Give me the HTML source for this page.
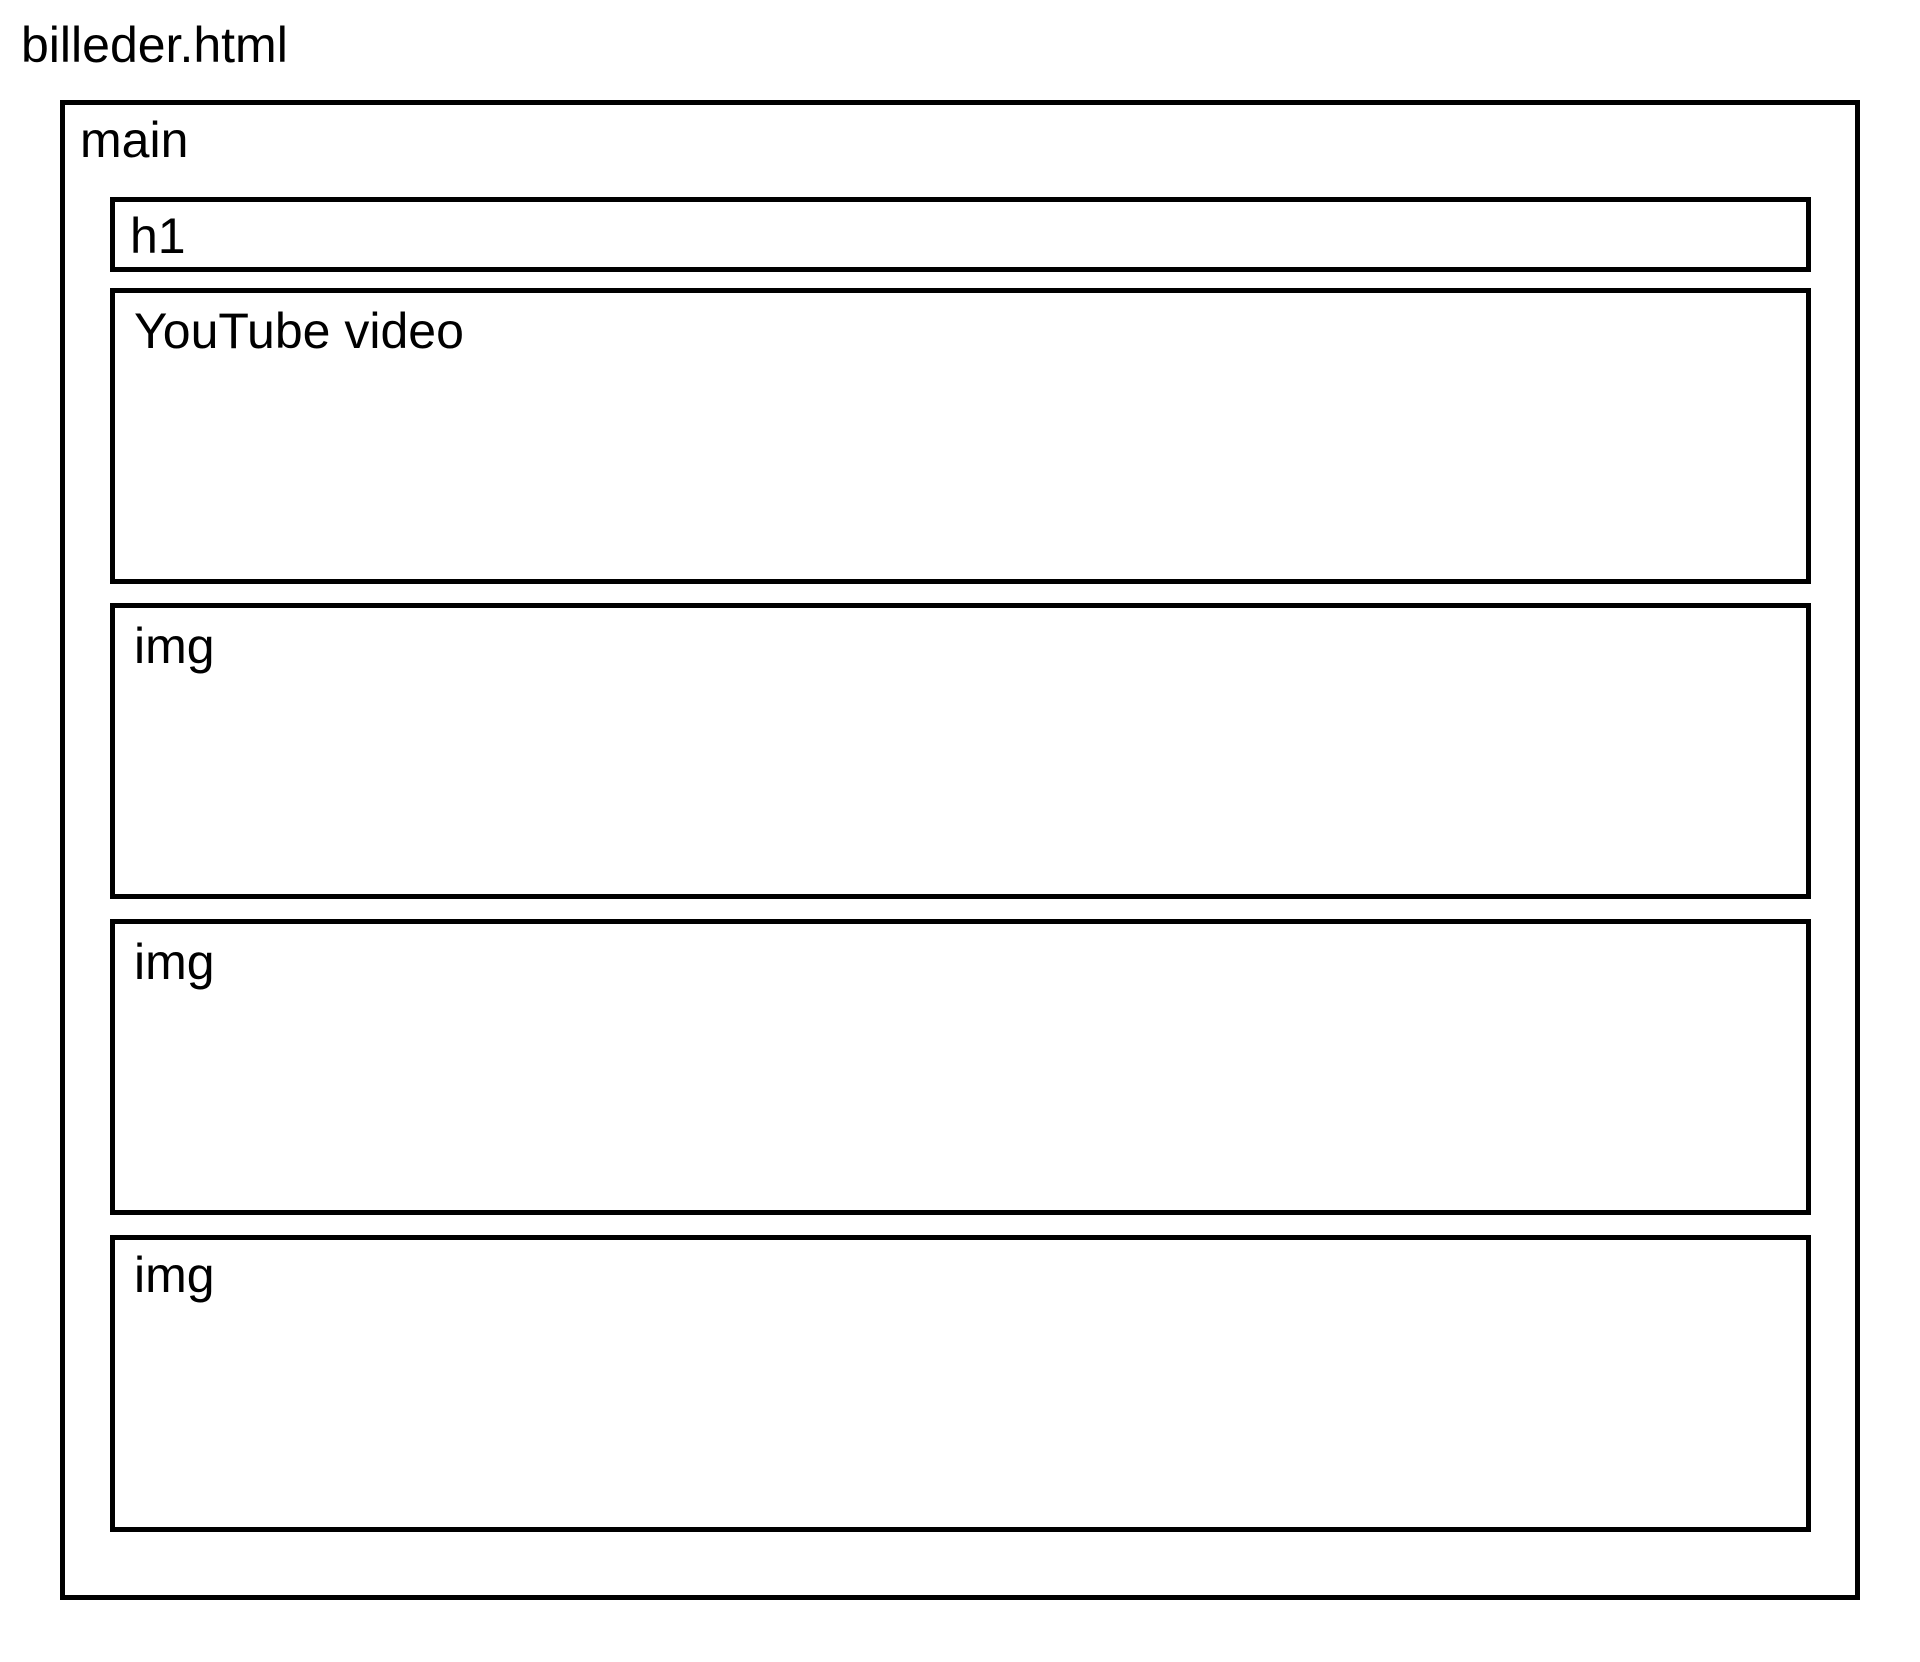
<!DOCTYPE html>
<html><head><meta charset="utf-8"><style>
html,body{margin:0;padding:0;background:#fff;width:1920px;height:1662px;overflow:hidden}
body{position:relative;font-family:"Liberation Sans",Arial,sans-serif;color:#000}
.b{position:absolute;border:5px solid #000;box-sizing:border-box}
.t{position:absolute;font-size:50px;line-height:1;white-space:nowrap}
</style></head><body>
<div class="t" style="left:21px;top:20px">billeder.html</div>
<div class="b" style="left:60px;top:100px;width:1800px;height:1500px"></div>
<div class="t" style="left:80px;top:115px">main</div>
<div class="b" style="left:110px;top:197px;width:1701px;height:75px"></div>
<div class="t" style="left:130px;top:211px">h1</div>
<div class="b" style="left:110px;top:288px;width:1701px;height:296px"></div>
<div class="t" style="left:134px;top:306px">YouTube video</div>
<div class="b" style="left:110px;top:603px;width:1701px;height:296px"></div>
<div class="t" style="left:134px;top:621px">img</div>
<div class="b" style="left:110px;top:919px;width:1701px;height:296px"></div>
<div class="t" style="left:134px;top:937px">img</div>
<div class="b" style="left:110px;top:1235px;width:1701px;height:297px"></div>
<div class="t" style="left:134px;top:1250px">img</div>
</body></html>
